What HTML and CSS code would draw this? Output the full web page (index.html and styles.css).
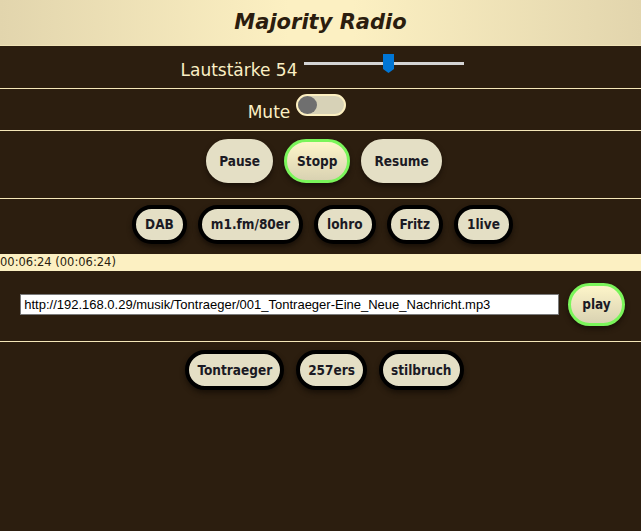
FILE: index.html
```html
<!DOCTYPE html>
<html lang="de">
<head>
<meta charset="utf-8">
<title>Majority Radio</title>
<link rel="stylesheet" href="styles.css">
</head>
<body>
<header class="header"><h1 class="title">Majority Radio</h1></header>

<section class="row row-volume">
  <span class="label label-volume">Lautstärke 54</span>
  <div class="slider">
    <div class="track"></div>
    <svg class="thumb" width="11" height="19" viewBox="0 0 11 19"><path d="M0 0H11V15L5.5 19L0 15Z" fill="#0076d6"/></svg>
  </div>
</section>

<section class="row row-mute">
  <span class="label label-mute">Mute</span>
  <div class="toggle"><div class="knob"></div></div>
</section>

<section class="row row-ctrl">
  <button class="btn btn-soft">Pause</button>
  <button class="btn btn-soft btn-active">Stopp</button>
  <button class="btn btn-soft">Resume</button>
</section>

<section class="row row-stations">
  <button class="btn btn-dark">DAB</button>
  <button class="btn btn-dark">m1.fm/80er</button>
  <button class="btn btn-dark">lohro</button>
  <button class="btn btn-dark">Fritz</button>
  <button class="btn btn-dark">1live</button>
</section>

<div class="timebar">00:06:24 (00:06:24)</div>

<section class="row row-url">
  <input class="url" type="text" value="http://192.168.0.29/musik/Tontraeger/001_Tontraeger-Eine_Neue_Nachricht.mp3">
  <button class="btn btn-soft btn-active btn-play">play</button>
</section>

<section class="row row-albums">
  <button class="btn btn-dark">Tontraeger</button>
  <button class="btn btn-dark">257ers</button>
  <button class="btn btn-dark">stilbruch</button>
</section>
</body>
</html>
```
FILE: styles.css
```css
html, body {
  margin: 0;
  padding: 0;
  background: #2c1e0f;
  height: 100%;
}
body {
  font-family: "DejaVu Sans", Verdana, sans-serif;
  color: #fbefc4;
}
.header {
  height: 45px;
  border-bottom: 1px solid #f0e3b6;
  background: linear-gradient(to right, #e2d5ad 0%, #fcf0c2 45%, #fcf0c2 55%, #e2d5ad 100%);
  text-align: center;
}
.title {
  margin: 0;
  font-family: "DejaVu Sans", Verdana, sans-serif;
  font-weight: bold;
  font-style: italic;
  font-size: 21px;
  line-height: 44px;
  color: #2b1d0e;
}
.row {
  display: flex;
  justify-content: center;
  align-items: flex-start;
  border-bottom: 1px solid #f5e7b8;
  box-sizing: border-box;
}
.label {
  font-size: 17px;
  line-height: 20px;
  color: #fbefc4;
}
.row-volume {
  height: 43px;
  padding-top: 8px;
  padding-left: 3px;
  gap: 6px;
}
.label-volume { margin-top: 6px; }
.slider {
  position: relative;
  width: 160px;
  height: 20px;
}
.track {
  margin-top: 8px;
  height: 3px;
  background: #d4d4d4;
}
.thumb {
  position: absolute;
  left: 79px;
  top: 0;
}
.row-mute {
  height: 42px;
  padding-top: 5px;
  gap: 6px;
}
.label-mute { margin-top: 8px; }
.toggle {
  width: 50px;
  height: 22px;
  box-sizing: border-box;
  border: 2px solid #fcefc0;
  border-radius: 11px;
  background: #d7d2b7;
  display: flex;
  align-items: center;
  margin-right: 47px;
}
.knob {
  width: 19px;
  height: 18px;
  border-radius: 50%;
  background: #6f6f6f;
}
.btn {
  font-family: "DejaVu Sans Condensed", "DejaVu Sans", sans-serif;
  font-stretch: condensed;
  font-weight: bold;
  font-size: 13.5px;
  line-height: 15px;
  color: #1b1a24;
  margin: 0;
  cursor: pointer;
}
.btn-soft {
  height: 44px;
  padding: 0 10px;
  border: 3px solid #e4dfc5;
  border-radius: 22px;
  background: #e4dfc5;
  box-shadow: 0 3px 5px #1a1108;
}
.btn-active {
  border-color: #7af55a;
  background: linear-gradient(to bottom, #fdf5c9, #d9d2b2);
}
.row-ctrl {
  height: 68px;
  padding-top: 8px;
  padding-left: 7px;
  gap: 11px;
}
.btn-dark {
  height: 39px;
  padding: 0 9px;
  border: 4px solid #000;
  border-radius: 20px;
  background: #e4dfc5;
  box-shadow: 0 3px 5px #1a1108;
}
.row-stations {
  height: 55px;
  padding-top: 6px;
  padding-left: 4px;
  gap: 11px;
  border-bottom: none;
}
.timebar {
  height: 17px;
  background: #fcf0c2;
  color: #2b1d0e;
  font-size: 11.5px;
  line-height: 17px;
}
.row-url {
  height: 71px;
  padding-top: 12px;
  padding-bottom: 15px;
  padding-left: 4px;
  gap: 9px;
  align-items: center;
}
.url {
  width: 539px;
  height: 21px;
  box-sizing: border-box;
  border: 1px solid #7a7a7a;
  padding: 0 3px;
  margin: 0;
  font-family: "Liberation Sans", Arial, sans-serif;
  font-size: 13px;
  color: #000;
  background: #fff;
}
.btn-play {
  height: 43px;
  padding: 0 11px;
}
.row-albums {
  padding-top: 8px;
  padding-left: 8px;
  gap: 12px;
  border-bottom: none;
}
.row-albums .btn-dark {
  height: 40px;
  padding: 0 8px;
}
```
